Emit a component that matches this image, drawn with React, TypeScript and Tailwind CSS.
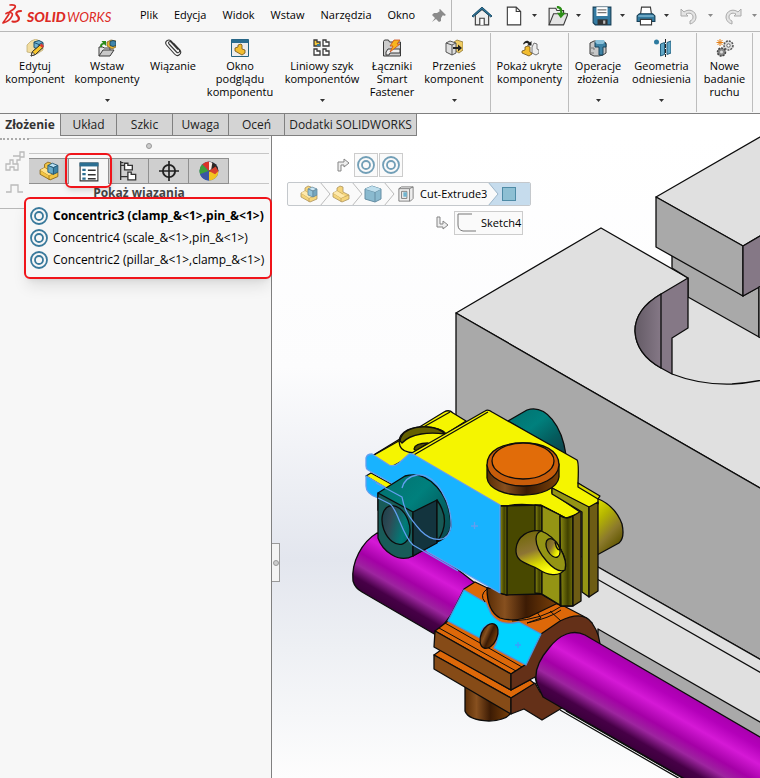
import type { ReactNode } from "react";

const ink = "#3a3a3a";

function Caret({ dim = false }: { dim?: boolean }) {
  return (
    <svg width="7" height="4" viewBox="0 0 7 4" className="shrink-0" aria-hidden="true">
      <path d="M1 0h5L3.500 3z" fill={dim ? "#8a8a8a" : "#333"} />
    </svg>
  );
}

function Svg({ children, size = 18 }: { children: ReactNode; size?: number }) {
  return (
    <svg width={size} height={size} viewBox="0 0 18 18" fill="none" className="shrink-0" aria-hidden="true">
      {children}
    </svg>
  );
}

function Logo() {
  return (
    <svg width="112" height="24" viewBox="0 0 112 24" className="shrink-0" role="img" aria-label="SOLIDWORKS">
      <g fill="none" stroke="#dd2a25" strokeLinecap="round" strokeLinejoin="round">
        <path d="M10 1C14 .5 16 1.500 15 3.500C14 5.500 12 6.500 10 7.500" strokeWidth="1.700" />
        <path d="M6 9.500C10 7.500 13.500 8.500 12 12C10.500 15.500 7 18 3 19C5 16 7.500 12.500 9 10" strokeWidth="1.700" />
        <path d="M21 7C17.500 7 15.500 8.500 16.500 10.500C18 12.500 20 13.500 18.500 16C17.500 17.500 14.500 18 12.500 17.500" strokeWidth="2.200" />
      </g>
      <text x="27" y="18" fill="#dd2a25" fontFamily="Lato, sans-serif" fontSize="14" fontStyle="italic" fontWeight="900">SOLID</text>
      <text x="67" y="18" fill="#dd2a25" fontFamily="Lato, sans-serif" fontSize="13" fontStyle="italic">WORKS</text>
    </svg>
  );
}

function PartIcon({ cube = true, size = 20 }: { cube?: boolean; size?: number }) {
  return (
    <Svg size={size}>
      <path d="M1 8l4-2V3l3-2 3 1v5l6 3v4l-7 3-9-5z" fill="#f3c544" stroke="#8a671c" strokeWidth=".8" />
      <path d="M1 8l8 5v4M9 13l8-3M5 6l6 3" stroke="#a57918" strokeWidth=".8" />
      <path d="M1 8l4-2 8 5-4 2z" fill="#ffe28b" />
      {cube && (
        <g stroke="#245a79" strokeWidth=".8">
          <path d="M8 4l4-2 5 2-4 2z" fill="#b9e0f2" />
          <path d="M8 4l5 2v6l-5-2z" fill="#69abc9" />
          <path d="M13 6l4-2v6l-4 2z" fill="#3d82a5" />
        </g>
      )}
    </Svg>
  );
}

function Concentric({ size = 18 }: { size?: number }) {
  return (
    <Svg size={size}>
      <circle cx="9" cy="9" r="8" stroke="#39799b" strokeWidth="1.800" />
      <circle cx="9" cy="9" r="4" stroke="#39799b" strokeWidth="1.800" />
    </Svg>
  );
}

const EditIcon = (
  <Svg>
    <path d="M1 6l4-4 5-2 7 4v7l-6 4-10-2z" fill="#f2dda0" stroke="#b9a66c" strokeWidth=".7" />
    <path d="M8 3l5-1.500 4 2v5l-4 2-5-2z" fill="#6fb1d0" stroke="#1f526e" />
    <path d="M8 3.500l5 2 4-2M13 5.500v5" stroke="#1f526e" />
    <path d="M5 17l1.500-4.500L14 6l3 2.500-7.500 7z" fill="#f7c52c" stroke="#222" />
    <path d="M13.500 6.500l2-2 2.500 2.500-1.500 2z" fill="#dd3b31" />
    <path d="M5 17l1.500-4 2.500 2.500z" fill="#f5e9cd" stroke="#222" strokeWidth=".7" />
  </Svg>
);
const InsertIcon = (
  <Svg>
    <path d="M1 17V8h4l1 1h6v2" fill="#e4e4e4" stroke={ink} />
    <path d="M1 17l4-6h11l-4 6z" fill="#c9c9c9" stroke={ink} />
    <path d="M2 8c0-3 1-4 3-4L3.500 2H8v5L6.500 5.500C4.500 5.500 4 6 4 8z" fill="#2a8b1a" />
    <path d="M9 3l4-2 5 1v6l-4 2-5-3z" fill="#eab52f" stroke="#6d531a" strokeWidth=".7" />
    <path d="M12 2.500l3-1 3 1v4l-3 1-3-1z" fill="#3f84aa" stroke="#173d56" strokeWidth=".8" />
  </Svg>
);
const ClipIcon = (
  <Svg>
    <path d="M5 5l7.500 8c2 2 4-.5 2.500-2.500L7 2C4.500-.5 0 2.500 2.500 6l8 9c3 3.500 8 0 5.500-4L9.500 4M5 5c-1.500-2 1-3 2-2l7 7.500" stroke="#333" strokeWidth="1.100" />
  </Svg>
);
const PreviewIcon = (
  <Svg>
    <path d="M.5.500h17v17H.500z" fill="#ececec" stroke="#24607f" />
    <path d="M.5.500h17V4H.500z" fill="#2a6d91" />
    <path d="M4 9l3-1V6l3-1 1 1v4l3 1v3l-3 2-7-4z" fill="#f2bd30" stroke="#705116" strokeWidth=".8" />
  </Svg>
);
const PatternIcon = (
  <Svg>
    {[[1, 1], [10, 1], [1, 10], [10, 10]].map(([x, y], i) => (
      <path key={i} d={`M${x} ${y}h3v2h3v4H${x}z`} fill={i ? "#fff" : "#f4c73b"} stroke={ink} strokeWidth="1.300" />
    ))}
    <path d="M4 5h3v2H4z" fill="#357c9f" />
  </Svg>
);
const FastenerIcon = (
  <Svg>
    <path d="M.5 17V2.500l1-1.500h4l1 2h11v14z" fill="#ccc" stroke={ink} />
    <path d="M3 13l2-3h12v4H7l-1 2H3z" fill="#eee" stroke={ink} />
    <path d="M11 1h6l-3 4h3L7 13l3-6H7z" fill="#f8b51f" stroke="#cc4a16" strokeWidth=".8" />
  </Svg>
);
const MoveIcon = (
  <Svg>
    <path d="M9 3l3-2 6 2v8l-4 3-5-3z" fill="#f0cc63" stroke="#8b7431" strokeWidth=".8" />
    <path d="M1 4l4-2 6 2v10l-4 2-6-3z" fill="#dedede" stroke="#555" />
    <path d="M1 4l6 2 4-2M7 6v10" stroke="#555" />
    <path d="M8 8h5V5.500l4 3.500-4 3.500V10H8z" fill="#222" />
  </Svg>
);
const HiddenIcon = (
  <Svg>
    <path d="M2 5c2-4 5-4 7-1.500L10.500 2v4.500H6L7.500 5C6 3.500 4 4 3 5.500z" fill="#222" />
    <path d="M1 12l3-1V8l3-1 2 1v5l2 1v1l-3 2-7-3z" fill="#f2bd30" stroke="#6e511a" strokeWidth=".8" />
    <path d="M11 8l2-4 3 1v5l2 1v3l-3 2-4-2z" fill="#eee" stroke="#555" strokeWidth=".8" />
  </Svg>
);
const OpsIcon = (
  <Svg>
    <path d="M1 4l4-2h9l3 2v10l-3 2-4 1H5l-4-2z" fill="#c8c8c8" stroke={ink} />
    <path d="M6 3h9l2 2v3h-3v8h-4V8H6z" fill="#3e83a6" stroke="#18435a" />
    <path d="M6 3l1-2h8l1 2-2 2H8z" fill="#8bc1da" />
    <path d="M2 9h3v2M2 14h3" stroke="#777" />
  </Svg>
);
const RefIcon = (
  <Svg>
    <circle cx="3.500" cy="3" r="2.500" fill="#2e7ba0" />
    <path d="M7.500 5l4-1.500v12l-4 1.500zM14 3.500l4-1.500v12l-4 1.500z" fill="#5fa6c6" stroke="#26617f" />
    <path d="M12.500 0v18" stroke="#222" strokeDasharray="4 1" />
  </Svg>
);
const StudyIcon = (
  <Svg>
    <circle cx="12.500" cy="6.500" r="4.500" stroke="#555" strokeWidth="1.500" strokeDasharray="2 1" fill="#ddd" />
    <circle cx="12.500" cy="6.500" r="1.700" fill="#fff" stroke="#666" />
    <circle cx="5.500" cy="13" r="4" stroke="#444" strokeWidth="1.500" strokeDasharray="2 1" fill="#888" />
    <circle cx="5.500" cy="13" r="1.500" fill="#ddd" />
    <path d="M4 0v7M.500 3.500h7M1.500 1l5 5M6.500 1l-5 5" stroke="#e38018" />
  </Svg>
);

type Tool = { label: string; icon: ReactNode; width: string; caret?: boolean; end?: boolean };
const tools: Tool[] = [
  { label: "Edytuj\nkomponent", icon: EditIcon, width: "w-[70px]" },
  { label: "Wstaw\nkomponenty", icon: InsertIcon, width: "w-[74px]", caret: true },
  { label: "Wiązanie", icon: ClipIcon, width: "w-[58px]" },
  { label: "Okno\npodglądu\nkomponentu", icon: PreviewIcon, width: "w-[76px]" },
  { label: "Liniowy szyk\nkomponentów", icon: PatternIcon, width: "w-[88px]", caret: true },
  { label: "Łączniki\nSmart\nFastener", icon: FastenerIcon, width: "w-[52px]" },
  { label: "Przenieś\nkomponent", icon: MoveIcon, width: "w-[73px]", caret: true, end: true },
  { label: "Pokaż ukryte\nkomponenty", icon: HiddenIcon, width: "w-[78px]", end: true },
  { label: "Operacje\nzłożenia", icon: OpsIcon, width: "w-[58px]", caret: true },
  { label: "Geometria\nodniesienia", icon: RefIcon, width: "w-[70px]", caret: true, end: true },
  { label: "Nowe\nbadanie\nruchu", icon: StudyIcon, width: "w-14", end: true },
];

const quick: { name: string; icon: ReactNode; dim?: boolean }[] = [
  { name: "Nowy", icon: <Svg size={20}><path d="M3 1h8l4 4v12H3z" fill="#fff" stroke={ink} /><path d="M11 1v4h4" stroke={ink} /></Svg> },
  { name: "Otwórz", icon: <Svg size={20}><path d="M1 17V2h6l1 2h6v4" fill="#eee" stroke={ink} /><path d="M1 17L5 7h13l-4 10z" fill="#e4e4e4" stroke={ink} /><path d="M8 0c4 0 5 2 5 6h3l-4.500 5L8 6h3c0-3-1-4-3-4z" fill="#2d8e17" /></Svg> },
  { name: "Zapisz", icon: <Svg size={20}><path d="M1 1h16v16H3l-2-2z" fill="#347ba2" stroke="#173f57" /><path d="M4 1h10v8H4z" fill="#fff" /><path d="M5 3.500h8M5 6h8" stroke="#777" /><path d="M5 12h9v5H5z" fill="#333" /><path d="M10 13h2v3h-2z" fill="#bbb" /></Svg> },
  { name: "Drukuj", icon: <Svg size={20}><path d="M5 1h8l1 7H4z" fill="#fff" stroke={ink} /><path d="M1 9l2-2h12l2 2v5H1z" fill="#327a9f" stroke="#173f57" /><path d="M2 9h14" stroke="#9ccce2" /><path d="M4 12h10v5H4z" fill="#fff" stroke={ink} /></Svg> },
  { name: "Cofnij", dim: true, icon: <Svg><path d="M1 2v7h7L6 7c4-2 7 0 7 3 0 2-1 3-3 4v3c4-1 6-4 6-7 0-6-7-9-12-5z" fill="#e4e4e4" stroke="#aaa" /></Svg> },
  { name: "Ponów", dim: true, icon: <Svg><path d="M17 2v7h-7l2-2c-4-2-7 0-7 3 0 2 1 3 3 4v3c-4-1-6-4-6-7 0-6 7-9 12-5z" fill="#e4e4e4" stroke="#aaa" /></Svg> },
];

const panelTabs: { name: string; icon: ReactNode }[] = [
  { name: "Drzewo operacji", icon: <PartIcon /> },
  { name: "Właściwości", icon: <Svg size={20}><path d="M1 1h16v16H1z" fill="#fff" stroke="#333" /><path d="M.5.500h17V4H.500z" fill="#2c6f92" /><path d="M3 6h3v2H3zM3 10h3v2H3zM3 14h3v2H3z" fill="#2c6f92" /><path d="M8 7.500h7M8 11.500h7M8 15h7" stroke="#333" strokeWidth="1.300" /></Svg> },
  { name: "Konfiguracje", icon: <Svg size={20}><path d="M1.500 0v17M2 4h4M2 14h6M1 1.500h3" stroke="#333" strokeWidth="1.200" /><path d="M5 2h3v2h4v4H5zM8 10h3v2h4v5H8z" fill="#fff" stroke="#333" strokeWidth="1.200" /></Svg> },
  { name: "Wymiary", icon: <Svg size={20}><circle cx="9" cy="9" r="5.500" stroke="#222" strokeWidth="1.700" /><path d="M9 0v18M0 9h18" stroke="#222" strokeWidth="1.500" /></Svg> },
  { name: "Wygląd", icon: <Svg size={20}><circle cx="9" cy="9" r="8.500" fill="#2f62b4" /><path d="M9 9L1 12A8.500 8.500 0 0 1 3 3z" fill="#3f9d3b" /><path d="M9 9L3 3A8.500 8.500 0 0 1 9 .500z" fill="#dc3328" /><path d="M9 10V.500A8.500 8.500 0 0 1 17.500 9z" fill="#2d2623" /><path d="M9 9.500L17.500 9A8.500 8.500 0 0 1 9 17.500z" fill="#f3c421" /><path d="M9 9v8.500A8.500 8.500 0 0 1 1 12z" fill="#3b55a5" /><path d="M9 9L15 5l2.500 4-3 3z" fill="#d8402d" /><path d="M9 .500l3 1-1 6-2 1z" fill="#f7e8e3" /></Svg> },
];

const mates = [
  { text: "Concentric3 (clamp_&<1>,pin_&<1>)", bold: true },
  { text: "Concentric4 (scale_&<1>,pin_&<1>)", bold: false },
  { text: "Concentric2 (pillar_&<1>,clamp_&<1>)", bold: false },
];

function Model() {
  return (
    <svg
      viewBox="272 136 488 642"
      preserveAspectRatio="xMinYMin slice"
      className="absolute inset-0 h-full w-full"
      role="img"
      aria-label="Model złożenia"
      stroke="#0c0c0c"
      strokeWidth="1.300"
      strokeLinejoin="round"
      fill="none"
    >
      <defs>
        <linearGradient id="sky" x1="0" y1="0" x2="0" y2="1">
          <stop offset="0" stopColor="#fff" />
          <stop offset=".36" stopColor="#fcfcfd" />
          <stop offset=".66" stopColor="#e3e6ee" />
          <stop offset=".8" stopColor="#eef0f4" />
          <stop offset="1" stopColor="#fdfdfd" />
        </linearGradient>
        <linearGradient id="rod" gradientUnits="userSpaceOnUse" x1="582" y1="633" x2="545" y2="697">
          <stop offset="0" stopColor="#a800ad" />
          <stop offset=".14" stopColor="#b400ba" />
          <stop offset=".34" stopColor="#d519d6" />
          <stop offset=".56" stopColor="#a400a6" />
          <stop offset=".72" stopColor="#9d259f" />
          <stop offset=".88" stopColor="#470047" />
          <stop offset="1" stopColor="#3c003c" />
        </linearGradient>
        <linearGradient id="neck">
          <stop offset="0" stopColor="#5a2d06" />
          <stop offset=".25" stopColor="#87501f" />
          <stop offset=".55" stopColor="#3c1b04" />
          <stop offset="1" stopColor="#7c4108" />
        </linearGradient>
        <linearGradient id="teal" x1="0" y1="0" x2="1" y2="1">
          <stop offset="0" stopColor="#03706e" />
          <stop offset=".4" stopColor="#00807d" />
          <stop offset=".7" stopColor="#045c5d" />
          <stop offset="1" stopColor="#143d48" />
        </linearGradient>
        <linearGradient id="bore" x1="0" y1="0" x2="1" y2="1">
          <stop offset="0" stopColor="#143a44" />
          <stop offset=".35" stopColor="#2f4a55" />
          <stop offset=".7" stopColor="#007c78" />
          <stop offset="1" stopColor="#045b5b" />
        </linearGradient>
        <linearGradient id="boss" x1="0" y1="0" x2=".5" y2="1">
          <stop offset="0" stopColor="#e4e400" />
          <stop offset=".35" stopColor="#b5b500" />
          <stop offset=".7" stopColor="#8c7a2c" />
          <stop offset="1" stopColor="#5f5500" />
        </linearGradient>
        <linearGradient id="cone" x1="0" y1="0" x2=".4" y2="1">
          <stop offset="0" stopColor="#6b6500" />
          <stop offset=".5" stopColor="#8d7534" />
          <stop offset=".8" stopColor="#d9d900" />
          <stop offset="1" stopColor="#ffff10" />
        </linearGradient>
        <linearGradient id="edge">
          <stop offset="0" stopColor="#8a8a12" />
          <stop offset=".6" stopColor="#414100" />
          <stop offset="1" stopColor="#6e6e08" />
        </linearGradient>
        <linearGradient id="wall">
          <stop offset="0" stopColor="#645b66" />
          <stop offset="1" stopColor="#857886" />
        </linearGradient>
      </defs>
      <path d="M272 136H760V778H272z" fill="url(#sky)" stroke="none" />

      {/* machine bed */}
      <path d="M456 313L601 228L688 278L772 326V495z" fill="#e0e0e0" />
      <path d="M672 250V268L688 278V297L759 337V287L743 296z" fill="#a9a9a9" />
      <path d="M656 197L772 130V229L743 246z" fill="#e0e0e0" />
      <path d="M656 197L743 246V296L656 247z" fill="#a9a9a9" />
      <path d="M743 246L772 229V280L743 296z" fill="#857886" />
      <path d="M759 287L772 280V344L759 337z" fill="#e0e0e0" />
      <path d="M688 278L661 294Q635 309 635 331Q636 354 661 368L672 374V338L688 328z" fill="#857886" />
      <path d="M661 294Q635 309 635 331Q636 354 661 368z" fill="url(#wall)" />
      <path d="M672 374Q700 385 732 384Q750 383 772 378" />
      <path d="M456 313L772 495V666L598 567L456 484z" fill="#a9a9a9" />
      <path d="M560 545L772 666V743L560 618z" fill="#e0e0e0" stroke="none" />
      <path d="M598 567L772 666M590 575L772 679" />
      <path d="M580 619L772 744V800L685 780L560 708z" fill="#a9a9a9" stroke="none" />
      <path d="M598 629L772 729V760L598 660z" fill="#a9a9a9" />
      <path d="M560 710L680 779M566 711L686 780" />

      {/* left rod */}
      <path d="M377 533C362 542 351 562 353 581Q355 588 362 592L436 635L475 583L420 540z" fill="url(#rod)" />

      {/* lower clamp */}
      <path d="M465 686V711Q468 720 489 721Q508 720 511 712V700z" fill="url(#neck)" />
      <path d="M434 655L441 650L511 690L530 680L535 684L511 698z" fill="#dd6809" />
      <path d="M434 655L511 698V714L434 669z" fill="#864b17" />
      <path d="M511 698L535 683L540 692L562 708L542 720L524 709L511 714z" fill="#643018" />
      <path d="M464 589L475 582L500 594L560 604L583 616L592 623L566 640L541 634L525 665L511 674L435 631L448 621z" fill="#dd6809" />
      <path d="M435 631L511 674V690L434 647z" fill="#864b17" />
      <path d="M511 674L525 665L541 634L560 621Q583 610 592 623Q601 636 600 650L582 690L537 684L535 677L511 690z" fill="#643018" />
      <path d="M439 628L516 671M445 623L522 667M550 611L561 621M527 623L541 618L537 612" strokeWidth="1" />
      <path d="M464 590L448 621L480 638Q481 626 490 624Q499 624 498 636Q497 643 494 648L526 665L541 634L519 622Q500 627 491 614L486 603z" fill="#00d3ff" stroke="#4e93dc" />
      <ellipse cx="489" cy="636" rx="8" ry="13" transform="rotate(24 489 636)" fill="url(#neck)" />
      <path d="M487 588Q487 611 500 618Q512 622 529 617L558 603L545 588z" fill="url(#neck)" />
      <path d="M487 589Q479 595 485 602M512 621Q542 620 565 604M527 623Q550 618 561 610" strokeWidth="1" />
      <path d="M515 645h6M518 642v6" stroke="#39a0ff" />

      {/* right rod */}
      <path d="M585 635C573 629 560 634 549 648C537 662 534 674 537 684L543 697L685 779L772 790V744z" fill="url(#rod)" />

      {/* upper clamp */}
      <path d="M508 421L527 410C546 404 562 426 566 455z" fill="url(#teal)" />
      <path d="M596 498Q615 505 622 524Q625 538 619 543L597 555z" fill="url(#boss)" />
      <path d="M367 459L444 412Q449 409 453 413L466 421L413 455L391 467z" fill="#f5f500" />
      <path d="M374 455L450 412" />
      <path d="M400 446C396 435 407 427 423 427C435 427 444 430 446 434L414 453Q402 452 400 446z" fill="#f5f500" />
      <path d="M400 441C401 431 413 426 428 427Q440 428 445 434C430 432 411 433 402 443z" fill="#646000" />
      <path d="M414 449Q415 443 428 443L416 451z" fill="#545000" />
      <path d="M410 454L485 411Q488 409 492 412L577 460Q579 462 578 483L598 497V504L589 508L552 488L552 493L580 512Q578 517 566 518L541 506Q520 503 507 506H500z" fill="#f5f500" />
      <path d="M412 456L488 412" />
      <path d="M500 506H507L541 505L566 518L580 513V601L572 606L561 606L541 594L507 595L500 593z" fill="#484800" />
      <path d="M500 506H507V595L500 593z" fill="url(#edge)" />
      <path d="M535 505L542 506V594L535 593z" fill="url(#edge)" />
      <path d="M542 506L560 515V605L542 594z" fill="#949414" />
      <path d="M560 516Q567 520 573 516V606H561z" fill="url(#edge)" />
      <path d="M573 516L581 511V601L573 606z" fill="#6d5c14" />
      <path d="M552 488L589 507V597L582 592V512L552 494z" fill="#949414" />
      <path d="M589 507L598 502V591L589 597z" fill="#6d5c14" />
      <path d="M578 483L600 496L598 499L578 487z" fill="#d8d800" />
      <path d="M516 549C517 536 529 529 541 531C557 537 568 558 565 569C559 578 547 575 538 569C526 563 515 562 516 549z" fill="url(#cone)" />
      <path d="M541 531C558 537 568 560 565 570C555 575 536 552 536 539Q536 533 541 531z" fill="#949414" />
      <ellipse cx="553" cy="548" rx="6" ry="10" transform="rotate(-28 553 548)" fill="url(#cone)" />
      <path d="M555 542Q557 552 561 549" />

      <path d="M366 476L371 473L404 491V499z" fill="#f5f500" />
      <path d="M366 458Q367 454 372 454L389 465Q394 467 399 463L409 454Q412 453 416 456L500 505V593L428 552L378 498Q366 494 366 486V476L402 497V489L368 470Q366 469 366 466z" fill="#18b3ff" stroke="#629ff0" />
      <path d="M378 493L405 476C430 469 450 496 451 525Q450 537 437 542L413 556L378 510z" fill="url(#teal)" />
      <path d="M378 493L413 512V556C398 564 382 550 378 538z" fill="#185b58" />
      <path d="M413 512L437 500V543L413 556z" fill="#13343e" />
      <path d="M437 500Q452 521 437 542z" fill="#175955" />
      <ellipse cx="396" cy="525" rx="13" ry="20" transform="rotate(-20 396 525)" fill="url(#bore)" />
      <path d="M378 486L402 488Q405 477 417 475C437 473 452 504 451 526C449 544 432 542 421 531C406 514 404 508 402 497M371 479L390 491Q397 496 395 510C402 520 405 537 413 545L458 571" stroke="none" />
      <path d="M402 488Q405 477 417 475C437 473 452 504 451 526C449 544 432 542 421 531C406 514 404 508 402 497L376 483M378 498L390 504C398 510 402 535 413 545L458 571" stroke="#629ff0" />
      <path d="M471 526h7M474.500 522v7" stroke="#629ff0" />

      <path d="M487 465V478C490 501 556 501 559 477V464z" fill="url(#neck)" />
      <path d="M487 465C487 450 503 443 523 443C543 443 559 450 559 465C557 493 490 493 487 465z" fill="#c75c0a" />
      <ellipse cx="523" cy="461" rx="31" ry="18" fill="#e16c09" />
    </svg>
  );
}

function Arrow({ down = false }: { down?: boolean }) {
  return (
    <svg width="14" height="14" viewBox="0 0 14 14" fill="#eee" stroke="#858585" className="shrink-0" aria-hidden="true">
      {down ? <path d="M2 1h3v7h3V5l5 4-5 4v-2H2z" /> : <path d="M2 13V4h6V1l5 4-5 4V7H5v6z" />}
    </svg>
  );
}

function Step({ children, label, first = false }: { children: ReactNode; label: string; first?: boolean }) {
  return (
    <button aria-label={label} className={`flex h-full shrink-0 items-center justify-end gap-px ${first ? "w-[43px]" : "w-8"}`}>
      <span className="opacity-70">{children}</span>
      <svg width="12" height="24" viewBox="0 0 12 24" fill="none" stroke="#bbb" className="shrink-0" aria-hidden="true"><path d="M1 0l10 12L1 24" /></svg>
    </button>
  );
}

export default function App() {
  return (
    <div className="flex min-h-screen flex-col overflow-hidden bg-[#f7f7f7] font-['Open_Sans','Noto_Sans',sans-serif] text-xs text-black">
      <header className="flex h-8 shrink-0 items-center overflow-hidden border-b border-[#b8b8b8] whitespace-nowrap">
        <div className="flex w-[140px] shrink-0"><Logo /></div>
        <nav className="flex w-[291px] shrink-0 gap-4 text-[11px]">
          {["Plik", "Edycja", "Widok", "Wstaw", "Narzędzia", "Okno"].map((m) => <button key={m}>{m}</button>)}
        </nav>
        <button aria-label="Przypnij" className="w-5 shrink-0">
          <svg width="16" height="16" viewBox="0 0 16 16" fill="#8b8b8b" aria-hidden="true"><path d="M9 1l6 6-2 1-1-1-2 3v3l-2 1-3-3-4 3 3-4-3-3 2-2h3l3-2-1-1z" /></svg>
        </button>
        <div className="h-8 w-px shrink-0 bg-[#b8b8b8]" />
        <button aria-label="Strona główna" className="ml-5 shrink-0">
          <Svg size={20}><path d="M3 8v9h12V8L9 3z" fill="#eee" stroke={ink} /><path d="M7 17v-6h4v6" fill="#fff" stroke={ink} /><path d="M0 9l9-8 9 8-1 1-8-7-8 7z" fill="#2f789d" stroke="#174762" strokeWidth=".8" /></Svg>
        </button>
        <div className="ml-3 flex shrink-0 gap-2.5">
          {quick.map((q) => (
            <button key={q.name} aria-label={q.name} className="flex w-[34px] shrink-0 items-center justify-between">
              {q.icon}
              <Caret dim={q.dim} />
            </button>
          ))}
        </div>
      </header>

      <div className="flex h-[81px] shrink-0 overflow-hidden py-px text-[11px]" role="toolbar" aria-label="Złożenie">
        {tools.map((t) => (
          <button key={t.label} className={`flex shrink-0 flex-col items-center pt-1.5 ${t.width} ${t.end ? "border-r border-[#bdbdbd]" : ""}`}>
            {t.icon}
            <span className="mt-0.5 flex h-10 items-start leading-[13px] whitespace-pre">{t.label}</span>
            {t.caret && <Caret />}
          </button>
        ))}
      </div>

      <div className="flex grow flex-col border-t border-[#808080] bg-white">
        <div className="flex h-[22px] shrink-0" role="tablist" aria-label="Karty poleceń">
          {["Złożenie", "Układ", "Szkic", "Uwaga", "Oceń", "Dodatki SOLIDWORKS"].map((t, i) => (
            <button
              key={t}
              role="tab"
              aria-selected={i === 0}
              className={
                i === 0
                  ? "w-[60px] bg-[#f7f7f7] text-[#333] font-bold"
                  : `border-b border-l border-[#808080] bg-[#d4d4d4] text-[#222] ${i === 5 ? "w-[133px] border-r" : "w-14"}`
              }
            >
              {t}
            </button>
          ))}
        </div>

        <div className="flex grow">
          <aside className="w-[272px] shrink-0 border-r border-[#808080] bg-[#f7f7f7] pt-0.5">
            <div className="flex">
              <div className="flex h-[71px] w-[29px] shrink-0 flex-col items-center gap-2 border-b border-[#b8b8b8]">
                <div className="w-full border-t-2 border-dotted border-[#aaa]" />
                <svg width="20" height="48" viewBox="0 0 20 48" fill="none" stroke="#bbb" aria-hidden="true">
                  <path d="M15 4h4v5h-4zM8 8h7v4h-3v4H9M1 22v-6h4v-4h3v4h5v6H9v-3H5v3zM1 44h5v-7h7v7h5" strokeWidth="1.300" />
                </svg>
              </div>
              <div className="mr-0.5 grow">
                <div className="flex h-4 items-center justify-center border-y border-[#c6c6c6]">
                  <div className="size-1.5 rounded-full border border-[#999] bg-[#ccc]" />
                </div>
                <div className="mt-1 flex h-[26px]" role="tablist" aria-label="Menedżer">
                  {panelTabs.map((p, i) => (
                    <button
                      key={p.name}
                      role="tab"
                      aria-label={p.name}
                      aria-selected={i === 1}
                      className={`flex w-10 items-center justify-center border-t border-r border-[#909090] ${
                        i === 1 ? "relative bg-[#f7f7f7]" : "border-b bg-[#cfcfcf]"
                      }`}
                    >
                      {p.icon}
                      {i === 1 && <span className="absolute -inset-x-1 -top-1.5 -bottom-1 rounded-md border-2 border-[#f0141a] shadow-md" />}
                    </button>
                  ))}
                  <div className="grow border-b border-[#c6c6c6]" />
                </div>
                <h2 className="h-[13px] pr-5 text-center leading-[18px] font-bold text-[#444]">Pokaż wiązania</h2>
              </div>
            </div>
            <ul className="relative -mt-3 -mr-px ml-6 flex h-[82px] flex-col rounded-md border-2 border-[#f0141a] bg-[#f7f7f7] pt-1.5 pl-1 shadow-lg">
              {mates.map((m) => (
                <li key={m.text} className={`flex h-[22px] items-center gap-[5px] whitespace-nowrap ${m.bold ? "font-bold" : ""}`}>
                  <Concentric />
                  {m.text}
                </li>
              ))}
            </ul>
          </aside>

          <main className="relative grow overflow-hidden">
            <Model />
            <div className="absolute top-[407px] left-0 flex h-[39px] w-2 items-center justify-center border border-l-0 border-[#999] bg-[#f4f4f4]">
              <div className="size-1.5 rounded-full border border-[#999] bg-[#ccc]" />
            </div>
            <div className="absolute top-[17px] left-[15px] flex w-[244px] flex-col gap-[5px] text-[11px] whitespace-nowrap">
              <div className="flex items-center gap-1 pl-[49px]">
                <Arrow />
                <div className="flex gap-px">
                  {["Concentric3", "Concentric4"].map((n) => (
                    <button key={n} aria-label={n} className="flex size-6 items-center justify-center border border-[#ccc] bg-[#fafafa]"><span className="opacity-70"><Concentric /></span></button>
                  ))}
                </div>
              </div>
              <div className="flex h-6 items-center overflow-hidden rounded-xs border border-[#c4c8cc] bg-[#fafafa]">
                <Step label="Złożenie" first><PartIcon size={18} /></Step>
                <Step label="Część"><PartIcon size={18} cube={false} /></Step>
                <Step label="Bryła">
                  <Svg><path d="M1 4l7-3 9 3v10l-6 3-10-3z" fill="#5a9ebd" stroke="#26617f" /><path d="M1 4l10 3 6-3M11 7v10" stroke="#26617f" /><path d="M1 4l7-3 9 3-6 3z" fill="#a5d3e7" /></Svg>
                </Step>
                <button className="flex grow items-center gap-1.5 pl-[3px]">
                  <Svg size={16}><path d="M1 3l3-2h13v13l-3 3H1z" fill="#eee" stroke="#777" /><path d="M1 3h12l4-2M13 3v14M4 6h6v8H4z" stroke="#777" /><path d="M6 7h4v5H6z" fill="#72b4ce" /></Svg>
                  Cut-Extrude3
                </button>
                <div className="flex h-full w-11 shrink-0 items-center bg-[#c6dced]">
                  <svg width="12" height="24" viewBox="0 0 12 24" className="shrink-0" aria-hidden="true"><path d="M0 0h1l10 12L1 24H0z" fill="#fafafa" /><path d="M1 0l10 12L1 24" fill="none" stroke="#9db7ca" /></svg>
                  <button aria-label="Ściana" className="ml-[3px] size-3.5 border border-[#4e8ba6] bg-[#8dbfd3]" />
                </div>
              </div>
              <div className="flex items-center justify-end gap-[5px] pr-2">
                <Arrow down />
                <button className="flex h-6 w-[69px] items-center gap-1 border border-[#ccc] bg-[#fafafa] pl-0.5">
                  <svg width="20" height="20" viewBox="0 0 20 20" fill="none" stroke="#777" className="shrink-0" aria-hidden="true"><path d="M15 1H1v11q0 5 5 6h13" /></svg>
                  Sketch4
                </button>
              </div>
            </div>
          </main>
        </div>
      </div>
    </div>
  );
}
